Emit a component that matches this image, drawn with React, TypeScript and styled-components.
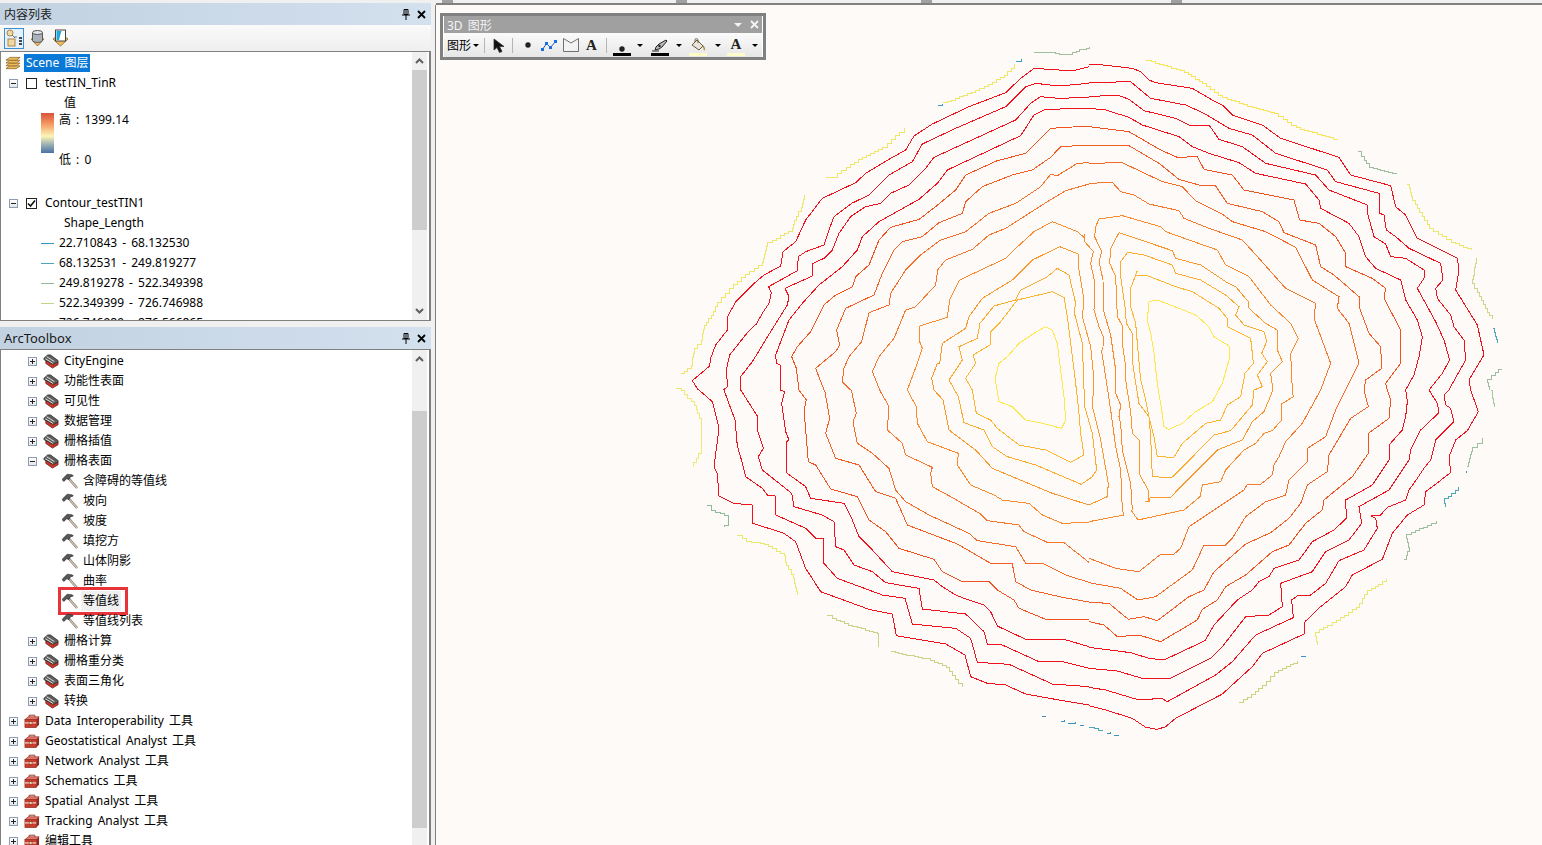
import React from "react";
import styled, { createGlobalStyle } from "styled-components";

const GlobalStyle = createGlobalStyle`
  html, body { margin: 0; padding: 0; height: 100%; overflow: hidden; }
  body {
    background: #f0f0f0;
    color: #000;
    font-family: "Noto Sans", "Noto Sans CJK SC", sans-serif;
    font-size: 12px;
    word-spacing: 2px;
  }
`;

/* ---------- contour data, drawn at 3x so it can be read straight off the zoomed map ---------- */

const RED = "#f2101c";
type Line = [string, string];
type Block = { origin: [number, number]; lines: Line[]; steps?: Line[] };

const blocks: Block[] = [
  {
    origin: [2010, 120],
    lines: [
      [RED, "88,1050 70,1022 122,978 125,955 140,915 175,870 176,830 200,785 250,735 285,705 335,678 342,635 380,605 410,540 460,475 560,428 590,400 660,358 710,330 735,288 790,252 900,200 1010,158 1055,115 1095,85 1170,90 1220,90 1260,80"],
      [RED, "163,1050 176,1040 172,990 182,945 235,878 262,852 280,820 300,790 307,758 299,740 385,692 388,650 410,635 465,615 478,575 495,530 548,490 600,465 660,405 730,365 760,312 860,265 1010,200 1070,140 1100,130 1170,138 1260,130"],
      [RED, "214,1050 215,1010 250,965 305,875 355,795 360,770 348,745 430,708 432,670 465,655 490,630 510,580 545,530 590,500 635,490 665,460 720,435 770,385 795,352 1040,240 1085,190 1115,170 1170,175 1260,172"],
      [RED, "334,1050 334,975 322,970 320,945 360,840 400,790 450,735 520,680 565,630 580,590 630,545 750,478 805,430 835,390 1055,287 1095,225 1130,208 1260,205"],
      ["#f2521f", "390,1050 382,985 368,950 385,920 425,875 465,795 500,765 550,740 560,710 600,675 630,600 665,562 750,538 800,500 860,450 890,405 985,362 1070,340 1145,265 1260,258"],
      ["#f45e25", "465,1050 440,985 500,935 512,915 503,870 530,805 615,765 640,700 675,630 700,605 760,590 810,548 880,520 890,485 940,440 1030,405 1090,390 1145,352 1175,320 1260,315"],
      ["#f66a28", "545,1050 520,1025 525,985 540,950 578,905 600,818 660,795 665,760 710,690 755,645 815,600 890,575 960,520 1040,490 1115,440 1145,403 1165,407 1225,370 1260,368"],
      ["#f8762b", "632,1050 610,995 630,950 675,895 710,810 740,800 800,735 806,690 830,660 910,628 960,585 1010,565 1135,485 1190,452 1260,432"],
      ["#fa8a2c", "715,1050 745,970 760,925 750,900 752,858 835,832 842,780 872,720 1010,655 1040,625 1095,575 1150,545 1225,575 1245,592"],
    ],
    steps: [
      ["#eee66a", "470,412 490,410 530,380 580,350 640,320 690,275 705,265"],
      ["#eee66a", "822,188 905,155 970,125 1005,105 1035,72"],
      ["#eee66a", "35,1000 65,975 75,925 95,900 105,855 125,825 145,785 180,745 215,710 280,665 295,605 345,580 370,565 375,540 395,500 405,465"],
      ["#3a9bd0", "808,195 818,192"],
      ["#3a9bd0", "1042,65 1055,58"],
      ["#a2bf9c", "1095,38 1130,35 1170,42 1200,42 1230,28 1260,22"],
      ["#eee66a", "22,1045 35,1050"],
    ],
  },
  {
    origin: [3270, 120],
    lines: [
      [RED, "0,75 25,73 130,85 155,95 180,120 200,128 310,145 370,180 400,195 430,225 520,255 575,295 750,352 785,405 905,437 920,500 950,525 985,595 1105,655 1110,690 1100,750 1165,855 1185,945 1140,1020 1145,1050"],
      [RED, "0,128 125,125 185,175 290,195 345,220 420,265 490,285 560,340 715,390 740,425 870,460 872,520 885,525 892,570 920,590 960,625 1055,670 1062,720 1040,745 1045,775 1085,825 1095,860 1125,900 1130,960 1085,1040 1080,1050"],
      [RED, "0,170 85,165 120,178 165,212 260,235 300,255 360,255 390,298 460,320 530,370 680,405 720,450 835,495 837,525 855,590 890,612 905,650 950,655 1005,690 1005,715 985,745 1040,845 1065,900 1082,960 1060,1000 1020,1050"],
      [RED, "0,205 50,210 120,232 160,255 270,290 310,320 360,340 450,368 500,400 650,432 690,480 695,505 780,550 810,590 830,650 860,685 935,720 950,780 985,840 1000,890 990,950 975,1005 950,1050"],
      ["#f2521f", "0,260 120,275 215,330 265,352 325,350 345,388 430,405 465,450 615,480 632,540 690,550 740,590 770,640 770,680 850,715 890,745 885,775 935,870 935,970 890,1030 895,1050"],
      ["#f45e25", "0,317 120,317 210,370 270,418 330,435 380,438 415,490 520,515 570,545 585,578 680,615 695,680 735,705 810,770 810,800 840,880 875,920 878,985 830,1020 825,1050"],
      ["#f66a28", "0,370 100,368 220,425 280,440 320,483 400,522 430,545 530,575 620,622 670,720 750,770 745,805 780,850 810,970 770,1050"],
      ["#f8762b", "0,430 70,427 95,455 135,465 180,492 270,512 285,535 360,565 460,600 510,655 590,745 680,790 675,835 725,970 695,1050"],
      ["#fa8a2c", "20,560 30,537 100,527 215,560 230,575 300,600 385,630 410,675 480,710 545,795 605,850 628,895 605,940 610,1050"],
      ["#fb962d", "90,578 250,632 260,655 335,675 410,725 440,740 478,785 480,805 530,850 565,870 565,930 580,965 545,1000 552,1050"],
      ["#fdab2e", "115,637 165,645 250,675 260,700 335,720 410,765 450,800 440,825 465,855 525,875 533,905 518,940 535,965 505,1005 520,1040 495,1050"],
    ],
    steps: [
      ["#f8e45a", "172,60 285,95 340,130 400,172 500,205 555,220 620,262 745,300"],
      ["#9cbd9f", "808,335 840,382 920,403"],
      ["#e8e870", "955,432 970,480 1020,565 1085,605 1145,630"],
      ["#c8d98a", "1162,655 1150,730 1175,780 1208,838"],
      ["#4da6b8", "1213,865 1225,908"],
      ["#9cbd9f", "1238,987 1195,1025 1200,1050"],
    ],
  },
  {
    origin: [2010, 1170],
    lines: [
      [RED, "1260,945 1170,930 1070,912 1010,885 955,880 905,860 888,795 830,762 682,737 670,672 600,658 455,605 410,535 380,455 345,430 252,400 250,345 195,340 150,318 145,250 135,230 150,115 130,35 90,0"],
      [RED, "1260,890 1150,882 1020,823 925,817 905,745 860,715 730,702 708,625 640,615 505,565 465,520 463,445 440,445 410,415 320,375 318,318 295,315 280,295 230,260 218,212 205,168 198,90 165,0"],
      [RED, "1260,835 1180,815 1110,815 1000,765 955,762 945,725 890,672 760,657 750,595 650,578 610,545 555,525 525,480 500,470 495,395 460,375 375,350 368,310 280,240 268,200 283,175 265,120 265,78 215,0"],
      [RED, "1260,770 1185,748 1070,748 985,708 965,665 945,645 890,627 860,615 820,590 795,570 670,545 610,480 570,440 545,378 525,340 425,325 410,290 352,248 352,155 360,150 350,125 338,40 347,5 334,0"],
      ["#f2521f", "1260,690 1130,688 1050,655 1035,630 985,600 960,575 875,573 820,545 795,508 690,475 650,425 600,390 565,320 485,297 440,225 418,215 405,60 412,30 390,0"],
      ["#f45e25", "1260,636 1180,622 1085,600 1040,575 1030,522 965,520 865,462 715,405 680,325 620,305 570,225 500,205 470,130 482,85 467,0"],
      ["#f66a28", "1260,577 1190,555 1125,522 1070,520 1040,470 925,452 900,430 780,375 710,335 680,300 660,235 610,190 565,160 552,95 562,70 547,0"],
      ["#f8762b", "1260,517 1185,458 1135,457 1065,425 1050,405 955,392 935,372 845,320 790,290 785,250 790,232 710,195 700,160 655,120 660,50 632,0"],
      ["#fa8a2c", "1260,397 1180,400 1120,375 1080,340 1000,330 975,315 905,285 865,225 868,190 775,155 745,100 742,50 715,0"],
    ],
    steps: [
      ["#eeea7a", "35,0 75,45 95,95 95,190 72,230"],
      ["#8fbb9a", "115,347 125,360 178,378 178,405 165,412"],
      ["#e8e870", "203,435 232,452 285,462 345,495 350,525 372,565 385,615"],
      ["#c5d585", "475,677 525,700 625,730 628,770"],
      ["#c5d585", "665,785 770,805 830,830 878,890"],
      ["#3a93c4", "1120,979 1128,979"],
      ["#3a93c4", "1175,993 1185,990"],
      ["#3a93c4", "1198,999 1218,997"],
      ["#3a93c4", "1232,1006 1242,1006"],
    ],
  },
  {
    origin: [3270, 1170],
    lines: [
      [RED, "1145,0 1168,65 1135,122 1100,150 1080,200 1085,248 1010,305 1005,345 955,375 910,430 880,508 790,555 770,590 695,650 648,695 645,732 520,790 490,830 400,912 260,985 230,1010 205,1018 170,1012 130,985 50,960 0,947"],
      [RED, "1080,0 1065,15 1070,45 1085,55 1095,95 1040,150 1025,210 1005,235 985,265 960,300 950,330 895,352 875,375 845,378 860,385 865,415 825,480 750,512 710,580 665,615 625,618 608,630 613,683 500,735 430,815 380,855 235,935 218,925 150,930 50,900 0,892"],
      [RED, "1020,0 1045,40 1050,68 995,120 965,180 960,210 900,300 810,350 818,400 780,450 710,485 670,545 575,580 580,650 540,675 470,680 400,770 365,805 245,865 160,865 85,843 0,835"],
      [RED, "950,0 955,35 950,80 940,120 900,165 900,210 850,285 770,330 772,385 735,420 670,455 630,510 555,535 540,560 510,575 490,600 445,630 375,705 348,752 225,810 180,805 125,788 0,772"],
      ["#f2521f", "895,0 905,30 900,85 838,130 838,190 790,260 705,330 700,360 650,400 600,465 550,485 470,555 410,590 385,630 340,658 325,690 215,755 150,735 85,740 45,705 0,695"],
      ["#f45e25", "825,0 838,50 785,85 720,195 715,245 655,285 635,340 600,385 545,428 470,462 375,545 345,600 300,620 205,692 165,680 118,688 60,640 0,637"],
      ["#f66a28", "770,0 740,60 710,140 655,175 655,215 600,270 590,315 530,335 470,380 430,445 410,465 345,465 310,540 200,620 147,630 95,595 0,578"],
      ["#f8762b", "695,0 640,100 590,155 570,200 555,225 550,255 515,283 475,283 465,300 300,410 275,475 255,492 215,493 150,545 80,535 0,505"],
      ["#fa8a2c", "100,360 105,375 0,395"],
      ["#fa8a2c", "610,0 613,20 578,42 578,90 550,122 525,130 500,160 465,180 410,240 395,275 340,285 333,320 285,360 147,390 126,360"],
      ["#fb962d", "552,0 525,65 490,95 460,150 410,170 385,180 280,285 245,322 190,322 180,325 180,333 168,333"],
      ["#fdab2e", "495,0 490,45 425,122 375,135 250,262"],
    ],
    steps: [
      ["#c8d580", "450,937 520,885 555,845 625,812"],
      ["#e8e870", "685,765 678,725 740,690 800,650 835,600 890,568"],
      ["#9dbfa0", "945,508 960,470 952,432 1040,393"],
      ["#4da6b8", "1068,352 1065,325 1108,292"],
      ["#9dbfa0", "1135,228 1150,170 1178,145"],
      ["#a8c8a0", "1205,0 1215,50"],
      ["#3a93c4", "635,799 648,799"],
      ["#3a93c4", "1130,243 1130,250"],
      ["#4da6b8", "0,1012 15,1015 40,1022"],
      ["#3a93c4", "55,1030 62,1027"],
      ["#3a93c4", "75,1036 87,1036"],
    ],
  },
  {
    origin: [2760, 660],
    lines: [
      ["#fde74c", "380,320 400,330 415,370 425,450 435,530 440,600 428,625 370,610 320,600 280,560 240,545 228,475 240,430 265,410 300,370 345,340 380,320"],
      ["#fdb52f", "400,215 435,232 445,290 455,370 470,490 478,560 485,640 495,705 455,727 380,690 300,675 235,625 215,600 172,580 160,510 140,475 170,430 162,405 213,375 215,335 245,305 295,240 380,220 400,215"],
      ["#fdab2e", "415,145 450,165 470,250 465,275 490,370 497,560 520,640 533,750 520,770 487,793 350,735 265,710 220,680 195,630 135,608 118,530 90,480 130,420 120,380 175,355 183,310 225,258 290,240 305,210 385,170 415,145"],
      ["#fb962d", "422,80 478,102 480,150 495,240 490,290 515,380 525,480 520,560 545,660 568,790 565,830 510,855 400,820 220,745 170,690 90,630 72,540 45,510 38,475 55,430 62,430 70,370 140,325 150,290 190,235 280,180 340,120 422,80"],
      ["#fa8a2c", "495,42 497,65 523,95 515,130 528,190 525,270 540,320 553,350 552,380 548,395 560,470 575,570 590,680 605,750 610,870"],
      ["#fa8a2c", "530,20 527,50 548,95 540,125 552,180 553,270 575,345 590,450 590,520 605,555 600,590 605,610 610,690 635,790 640,870"],
      ["#fb962d", "600,38 575,85 572,130 590,170 595,290 612,320 610,370 620,440 620,480 635,575 640,640 660,660 660,760 690,815 688,843 680,843"],
      ["#fdab2e", "625,98 605,125 605,170 618,260 622,310 640,340 640,420 650,490 660,550 690,590 695,650 700,770 760,773"],
      ["#fdb52f", "655,152 650,165 680,165 770,200 820,215 900,265 925,295 925,320 995,355 1000,400 1003,430 978,460 965,530 925,555 905,600 860,610 790,670 765,712 715,710 705,650 690,590 680,540 665,480 655,370 650,310 635,260 633,210 655,152"],
      ["#fde74c", "690,245 715,240 780,265 830,285 870,320 885,350 930,378 930,420 910,490 880,545 830,575 790,610 750,628 735,620 728,570 715,490 705,400 695,340 685,300 690,245"],
    ],
  },
];

// turns a rough polyline into the coarse stair pattern of the outer fragments
const stairs = (points: string) => {
  const pts = points.split(" ").map((p) => p.split(",").map(Number));
  const out: number[][] = [pts[0]];
  for (let i = 1; i < pts.length; i++) {
    const [x0, y0] = pts[i - 1];
    const [x1, y1] = pts[i];
    const n = Math.max(1, Math.round(Math.max(Math.abs(x1 - x0), Math.abs(y1 - y0)) / 12));
    for (let s = 1; s <= n; s++) {
      const x = Math.round((x0 + ((x1 - x0) * s) / n) / 3) * 3;
      const y = Math.round((y0 + ((y1 - y0) * s) / n) / 3) * 3;
      out.push([x, out[out.length - 1][1]], [x, y]);
    }
  }
  return out.map((p) => p.join(",")).join(" ");
};

/* ---------- layout ---------- */

const Shell = styled.div`
  display: flex;
  width: 1542px;
  height: 845px;
  overflow: hidden;
`;

const Dock = styled.div`
  width: 431px;
  flex: none;
  display: flex;
  flex-direction: column;
  padding-top: 3px;
`;

const TitleBar = styled.div<{ $size?: number }>`
  height: 22px;
  flex: none;
  display: flex;
  align-items: center;
  padding: 0 3px 0 4px;
  background: linear-gradient(90deg, #c2d2e1, #d3e0ee);
  color: #1a1a1a;
  font-size: ${(p) => p.$size ?? 12}px;
`;

const TitleText = styled.span`
  flex: 1;
`;

const TitleIcons = styled.div`
  display: flex;
  align-items: center;
  gap: 7px;
  padding-right: 2px;
`;

const TocToolbar = styled.div`
  height: 26px;
  flex: none;
  display: flex;
  align-items: center;
  gap: 3px;
  padding-left: 4px;
  background: linear-gradient(#fafafa, #efefef);
`;

const TocTool = styled.div<{ $active?: boolean }>`
  width: 20px;
  height: 21px;
  display: flex;
  align-items: center;
  justify-content: center;
  box-sizing: border-box;
  border: 1px solid ${(p) => (p.$active ? "#3b8fd0" : "transparent")};
  background: ${(p) => (p.$active ? "#e4f1fb" : "transparent")};
`;

const Pane = styled.div<{ $height: number }>`
  height: ${(p) => p.$height}px;
  flex: none;
  display: flex;
  box-sizing: border-box;
  border: 1px solid #808080;
  border-right-width: 2px;
  background: #fff;
  overflow: hidden;
`;

const ToolPane = styled(Pane)`
  border-bottom: none;
`;

const PaneGap = styled.div`
  height: 6px;
  flex: none;
`;

const Tree = styled.div<{ $top: number }>`
  flex: 1;
  min-width: 0;
  padding-top: ${(p) => p.$top}px;
  overflow: hidden;
`;

const Row = styled.div<{ $indent: number; $height?: number }>`
  height: ${(p) => p.$height ?? 20}px;
  display: flex;
  align-items: center;
  padding-left: ${(p) => p.$indent}px;
  white-space: nowrap;
  position: relative;
`;

// the Noto metrics sit a pixel lower than the original UI font
const Label = styled.span`
  margin-bottom: 2px;
`;

const Expander = styled.div`
  width: 9px;
  height: 9px;
  flex: none;
  box-sizing: border-box;
  border: 1px solid #8f9bb0;
  background: linear-gradient(#fff, #e4e6ea);
  position: relative;
  margin-right: 6px;
  &::before {
    content: "";
    position: absolute;
    left: 1px;
    right: 1px;
    top: 3px;
    height: 1px;
    background: #222;
  }
`;

const ExpanderPlus = styled(Expander)`
  &::after {
    content: "";
    position: absolute;
    top: 1px;
    bottom: 1px;
    left: 3px;
    width: 1px;
    background: #222;
  }
`;

const CheckBox = styled.div`
  width: 11px;
  height: 11px;
  flex: none;
  box-sizing: border-box;
  border: 1px solid #222;
  margin: 0 8px 0 2px;
  background: #fff;
  display: flex;
  align-items: center;
  justify-content: center;
`;

const Selected = styled.span`
  background: #0a78d7;
  color: #fff;
  height: 18px;
  line-height: 18px;
  padding: 0 2px;
  margin-left: 3px;
`;

const IconSlot = styled.div<{ $gap: number }>`
  width: 16px;
  height: 16px;
  flex: none;
  margin-right: ${(p) => p.$gap}px;
  display: flex;
  align-items: center;
  justify-content: center;
`;

const LegendLine = styled.span<{ $color: string }>`
  width: 13px;
  height: 1px;
  flex: none;
  margin-right: 5px;
  background: ${(p) => p.$color};
`;

const RampRow = styled.div`
  height: 60px;
  display: flex;
  padding-left: 40px;
  gap: 5px;
`;

const Ramp = styled.div`
  width: 13px;
  height: 40px;
  background: linear-gradient(#d8543a, #f59a62 28%, #fbf6b6 58%, #9fb3b4 78%, #4a70a8);
`;

const RampLabels = styled.div`
  display: flex;
  flex-direction: column;
  justify-content: space-between;
  height: 60px;
  margin-top: -3px;
  line-height: 20px;
`;

const Marked = styled.span`
  background: #f0f0f0;
  padding: 0 2px;
  margin-left: -2px;
  line-height: 20px;
`;

// red annotation the author of the screenshot drew round the tool
const Callout = styled.div`
  position: absolute;
  left: 57px;
  top: -4px;
  width: 70px;
  height: 28px;
  box-sizing: border-box;
  border: 3px solid #e8333b;
  pointer-events: none;
`;

const ScrollBar = styled.div`
  width: 15px;
  flex: none;
  margin-right: 2px;
  display: flex;
  flex-direction: column;
  background: #f0f0f0;
`;

const ScrollButton = styled.div`
  height: 18px;
  flex: none;
  display: flex;
  align-items: center;
  justify-content: center;
`;

const ScrollSpace = styled.div<{ $size?: number }>`
  flex: ${(p) => (p.$size === undefined ? 1 : "none")};
  height: ${(p) => p.$size ?? 0}px;
`;

const ScrollThumb = styled.div<{ $size: number }>`
  height: ${(p) => p.$size}px;
  flex: none;
  background: #cdcdcd;
`;

const MapArea = styled.div`
  flex: 1;
  min-width: 0;
  margin-left: 5px;
  display: flex;
  flex-direction: column;
  position: relative;
`;

const TopStrip = styled.div`
  height: 3px;
  flex: none;
  display: flex;
  box-sizing: content-box;
  border-bottom: 2px solid #808080;
`;

const Notch = styled.div<{ $left: number }>`
  width: 11px;
  height: 3px;
  margin-left: ${(p) => p.$left}px;
  background: #a0a0a0;
`;

const Canvas = styled.div`
  flex: 1;
  min-height: 0;
  background: #fefaf8;
  border-left: 1px solid #808080;
  margin-left: -1px;
`;

const MapSvg = styled.svg`
  display: block;
  shape-rendering: crispEdges;
`;

const FloatBar = styled.div`
  position: absolute;
  left: 4px;
  top: 13px;
  width: 326px;
  height: 47px;
  box-sizing: border-box;
  border: 3px solid #808080;
  display: flex;
  flex-direction: column;
  background: #f2f2f2;
`;

const FloatTitle = styled.div`
  height: 17px;
  flex: none;
  display: flex;
  align-items: center;
  padding: 0 3px;
  background: #a0a0a0;
  color: #f4f4f4;
  border: 0 solid #fff;
  border-width: 0 1px;
`;

const FloatRow = styled.div`
  flex: 1;
  display: flex;
  align-items: center;
  padding-left: 3px;
  background: linear-gradient(#fbfbfb, #e6e6e6);
  border: 0 solid #fff;
  border-width: 0 1px;
  white-space: nowrap;
`;

const FloatTool = styled.div<{ $width: number }>`
  width: ${(p) => p.$width}px;
  height: 22px;
  flex: none;
  display: flex;
  align-items: center;
  justify-content: center;
`;

const Separator = styled.div`
  width: 1px;
  height: 15px;
  flex: none;
  margin: 0 5px;
  background: #b5b5b5;
`;

const Caret = styled.span`
  width: 0;
  height: 0;
  flex: none;
  border-left: 3px solid transparent;
  border-right: 3px solid transparent;
  border-top: 3px solid #000;
`;

const WhiteCaret = styled(Caret)`
  border-left-width: 4px;
  border-right-width: 4px;
  border-top: 4px solid #f4f4f4;
  margin-right: 8px;
`;

const MenuLabel = styled.span`
  flex: none;
  margin-right: 2px;
`;

/* ---------- icons ---------- */

const PinIcon = () => (
  <svg width="8" height="11" viewBox="0 0 8 11">
    <path d="M2 .5h4v5H2zM0 6h8M4 6v5" fill="none" stroke="#000" />
    <path d="M4 1v4" stroke="#000" />
  </svg>
);

const CloseIcon = ({ color = "#000" }: { color?: string }) => (
  <svg width="9" height="9" viewBox="0 0 9 9">
    <path d="M1 1l7 7M8 1L1 8" stroke={color} strokeWidth="1.8" />
  </svg>
);

const ChevronIcon = ({ up }: { up?: boolean }) => (
  <svg width="9" height="6" viewBox="0 0 9 6">
    <path d={up ? "M1 5l3.5-3.5L8 5" : "M1 1l3.5 3.5L8 1"} fill="none" stroke="#606060" strokeWidth="2" />
  </svg>
);

const ToolsetIcon = () => (
  <svg width="17" height="15" viewBox="0 0 17 15">
    <path d="M3 6l8 5 5-3v3l-6 3.500L3 9.500z" fill="#c8352a" stroke="#6e1f18" strokeWidth=".8" />
    <path d="M1 4l4-3.500h3l8 6V8l-5 2.500L1 5.500z" fill="#5e5e5e" stroke="#2a2a2a" strokeWidth=".8" />
    <path d="M4 2.500l8 5M2.500 4.500l8 5" stroke="#e6e6e6" strokeWidth="1" />
  </svg>
);

const ToolboxIcon = () => (
  <svg width="17" height="15" viewBox="0 0 17 15">
    <path d="M5.500 2.500V.8h6v1.700" fill="none" stroke="#8c3024" />
    <path d="M1 5.500L4.500 2.500H16L13 5.500z" fill="#e8786a" stroke="#8c2a20" strokeWidth=".7" />
    <path d="M13 5.500L16 2.500v8.500L13 14z" fill="#8e2a1e" />
    <rect x="1" y="5.500" width="12" height="8.500" fill="#cc3b2d" stroke="#8c2a20" strokeWidth=".7" />
    <path d="M1 9h12" stroke="#f5d8cc" strokeWidth="1.300" />
    <rect x="5.500" y="7.500" width="3" height="3" fill="#f2e2b0" stroke="#6e2a20" strokeWidth=".6" />
  </svg>
);

const HammerIcon = () => (
  <svg width="17" height="16" viewBox="0 0 17 16">
    <path d="M6.500 4.500L16 15.500" stroke="#85786a" strokeWidth="2.600" />
    <path d="M6.500 4.500L16 15.500" stroke="#dad0c0" strokeWidth="1.100" />
    <path d="M0 6.500L5.500.8 11 1.500l1 1.200-3 .8-1.500 3L5 5.500l-3 3z" fill="#55585c" stroke="#2b2b2b" strokeWidth=".7" />
  </svg>
);

const LayersIcon = () => (
  <svg width="17" height="15" viewBox="0 0 17 15">
    {[9, 6, 3, 0].map((y) => (
      <path key={y} d={`M1 ${y + 4}l4-${3}h11l-4 3z`} fill="#eebd62" stroke="#8a6220" strokeWidth=".8" />
    ))}
  </svg>
);

const DrawOrderIcon = () => (
  <svg width="18" height="18" viewBox="0 0 18 18">
    <circle cx="5" cy="4" r="3" fill="#f3d9a0" stroke="#a9864a" />
    <rect x="3" y="10" width="7" height="7" fill="#f3d9a0" stroke="#a9864a" />
    <path d="M7 6l3 3M9 8h3" stroke="#777" />
    <path d="M14 9h3M14 12h3M14 15h3" stroke="#111" strokeWidth="1.400" />
  </svg>
);

const SourceIcon = () => (
  <svg width="17" height="18" viewBox="0 0 17 18">
    <path d="M2 10l6.500 7L15 10z" fill="#eebd62" stroke="#a07a30" />
    <path d="M3.500 3.500v8c0 2.500 10 2.500 10 0v-8" fill="#aab3bb" stroke="#555" />
    <ellipse cx="8.500" cy="3.500" rx="5" ry="2" fill="#e2e6ea" stroke="#555" />
  </svg>
);

const VisibleIcon = () => (
  <svg width="17" height="18" viewBox="0 0 17 18">
    <path d="M1 10l7.500 7L16 10l-3-2H4z" fill="#eebd62" stroke="#a07a30" />
    <rect x="3.500" y="1" width="10" height="11" fill="#fff" stroke="#444" />
    <path d="M4.500 2h5l-1.500 5-1 4h-2.500z" fill="#1fa8d8" />
  </svg>
);

const ArrowIcon = () => (
  <svg width="12" height="15" viewBox="0 0 12 15">
    <path d="M1 1v11l3-2.500L6.500 14.500l2.500-1L6.500 8.500H11z" fill="#111" stroke="#333" strokeWidth=".8" />
  </svg>
);

const PolylineIcon = () => (
  <svg width="16" height="11" viewBox="0 0 16 11">
    <path d="M1.500 9.500l4-6 4 4 5-6" fill="none" stroke="#2b5fb0" />
    {[[0, 8], [4, 2], [8, 6], [13, 0]].map(([x, y]) => (
      <rect key={x} x={x} y={y} width="3" height="3" fill="#1a6fe0" />
    ))}
  </svg>
);

const EnvelopeIcon = () => (
  <svg width="16" height="14" viewBox="0 0 16 14">
    <path d="M.5 .5L8 5l7.500-4.500v13H.5z" fill="#f2f2f2" stroke="#707070" />
  </svg>
);

const Dot = () => (
  <svg width="6" height="6" viewBox="0 0 6 6">
    <circle cx="3" cy="3" r="2.700" fill="#222" />
  </svg>
);

const SwatchTool = styled.div`
  height: 22px;
  display: flex;
  flex-direction: column;
  align-items: center;
  justify-content: flex-end;
  gap: 1px;
`;

const SwatchBar = styled.div<{ $color: string; $width: number }>`
  width: ${(p) => p.$width}px;
  height: 3px;
  background: ${(p) => p.$color};
`;

const SerifA = styled.span<{ $size: number }>`
  font-family: "Liberation Serif", serif;
  font-weight: bold;
  font-size: ${(p) => p.$size}px;
  line-height: ${(p) => p.$size}px;
  color: #222;
`;

const PenIcon = () => (
  <svg width="16" height="13" viewBox="0 0 16 13">
    <path d="M14 1l1 1-5 6-3 2-4 1 1-3 3-3z" fill="#bbb" stroke="#222" />
    <circle cx="7.500" cy="7" r="1.200" fill="#222" />
    <path d="M0 12h7" stroke="#222" />
  </svg>
);

const BucketIcon = () => (
  <svg width="16" height="14" viewBox="0 0 16 14">
    <path d="M2 7l5-5 6 6-4 4z" fill="#e8e4dc" stroke="#6a5a40" />
    <path d="M5 4V1.500C5 .5 8 .5 8 2v3" fill="none" stroke="#6a5a40" />
    <path d="M13 8c1 1.500 2 3 1 4" fill="none" stroke="#b08a40" strokeWidth="1.500" />
  </svg>
);

const CheckMark = () => (
  <svg width="9" height="9" viewBox="0 0 9 9">
    <path d="M1 4.500l2.500 2.500L8 1.500" fill="none" stroke="#111" strokeWidth="1.600" />
  </svg>
);

/* ---------- tree content ---------- */

const toolsets: [string, boolean][] = [
  ["CityEngine", false],
  ["功能性表面", false],
  ["可见性", false],
  ["数据管理", false],
  ["栅格插值", false],
  ["栅格表面", true],
];
const surfaceTools = ["含障碍的等值线", "坡向", "坡度", "填挖方", "山体阴影", "曲率", "等值线", "等值线列表"];
const moreToolsets = ["栅格计算", "栅格重分类", "表面三角化", "转换"];
const toolboxes = [
  "Data Interoperability 工具",
  "Geostatistical Analyst 工具",
  "Network Analyst 工具",
  "Schematics 工具",
  "Spatial Analyst 工具",
  "Tracking Analyst 工具",
  "编辑工具",
];
const legend: [string, string][] = [
  ["#3a93c4", "22.710843 - 68.132530"],
  ["#4da6b8", "68.132531 - 249.819277"],
  ["#8fbb9a", "249.819278 - 522.349398"],
  ["#c5d585", "522.349399 - 726.746988"],
  ["#e8e870", "726.746989 - 876.566865"],
];

const ToolsetRow = ({ label, open }: { label: string; open?: boolean }) => (
  <Row $indent={27}>
    {open ? <Expander /> : <ExpanderPlus />}
    <IconSlot $gap={5}>
      <ToolsetIcon />
    </IconSlot>
    <Label>{label}</Label>
  </Row>
);

export default function App() {
  return (
    <Shell>
      <GlobalStyle />
      <Dock>
        <TitleBar>
          <TitleText>内容列表</TitleText>
          <TitleIcons>
            <PinIcon />
            <CloseIcon />
          </TitleIcons>
        </TitleBar>
        <TocToolbar>
          <TocTool $active>
            <DrawOrderIcon />
          </TocTool>
          <TocTool>
            <SourceIcon />
          </TocTool>
          <TocTool>
            <VisibleIcon />
          </TocTool>
        </TocToolbar>
        <Pane $height={270}>
          <Tree $top={1}>
            <Row $indent={4} $height={20}>
              <IconSlot $gap={0}>
                <LayersIcon />
              </IconSlot>
              <Selected>Scene 图层</Selected>
            </Row>
            <Row $indent={8}>
              <Expander />
              <CheckBox />
              <Label>testTIN_TinR</Label>
            </Row>
            <Row $indent={63}>
              <Label>值</Label>
            </Row>
            <RampRow>
              <Ramp />
              <RampLabels>
                <span>高 : 1399.14</span>
                <span>低 : 0</span>
              </RampLabels>
            </RampRow>
            <Row $indent={0}></Row>
            <Row $indent={8}>
              <Expander />
              <CheckBox>
                <CheckMark />
              </CheckBox>
              <Label>Contour_testTIN1</Label>
            </Row>
            <Row $indent={63}>
              <Label>Shape_Length</Label>
            </Row>
            {legend.map(([color, text]) => (
              <Row $indent={40} key={text}>
                <LegendLine $color={color} />
                <Label>{text}</Label>
              </Row>
            ))}
          </Tree>
          <ScrollBar>
            <ScrollButton>
              <ChevronIcon up />
            </ScrollButton>
            <ScrollThumb $size={160} />
            <ScrollSpace />
            <ScrollButton>
              <ChevronIcon />
            </ScrollButton>
          </ScrollBar>
        </Pane>
        <PaneGap />
        <TitleBar $size={13}>
          <TitleText>ArcToolbox</TitleText>
          <TitleIcons>
            <PinIcon />
            <CloseIcon />
          </TitleIcons>
        </TitleBar>
        <ToolPane $height={496}>
          <Tree $top={1}>
            {toolsets.map(([label, open]) => (
              <ToolsetRow key={label} label={label} open={open} />
            ))}
            {surfaceTools.map((tool) => (
              <Row $indent={61} key={tool}>
                <IconSlot $gap={5}>
                  <HammerIcon />
                </IconSlot>
                {tool === "等值线" ? (
                  <>
                    <Marked>{tool}</Marked>
                    <Callout />
                  </>
                ) : (
                  <Label>{tool}</Label>
                )}
              </Row>
            ))}
            {moreToolsets.map((label) => (
              <ToolsetRow key={label} label={label} />
            ))}
            {toolboxes.map((label) => (
              <Row $indent={8} key={label}>
                <ExpanderPlus />
                <IconSlot $gap={5}>
                  <ToolboxIcon />
                </IconSlot>
                <Label>{label}</Label>
              </Row>
            ))}
          </Tree>
          <ScrollBar>
            <ScrollButton>
              <ChevronIcon up />
            </ScrollButton>
            <ScrollSpace $size={43} />
            <ScrollThumb $size={417} />
            <ScrollSpace />
          </ScrollBar>
        </ToolPane>
      </Dock>

      <MapArea>
        <TopStrip>
          <Notch $left={6} />
          <Notch $left={223} />
          <Notch $left={234} />
          <Notch $left={239} />
        </TopStrip>
        <Canvas>
          <MapSvg width="1105" height="840" viewBox="1311 15 3315 2520">
            {blocks.map((block) => (
              <g key={block.origin.join()} transform={`translate(${block.origin[0]} ${block.origin[1]})`} fill="none" strokeWidth="3">
                {block.lines.map(([color, points]) => (
                  <polyline key={points} points={points} stroke={color} />
                ))}
                {block.steps?.map(([color, points]) => (
                  <polyline key={points} points={stairs(points)} stroke={color} />
                ))}
              </g>
            ))}
          </MapSvg>
        </Canvas>
        <FloatBar>
          <FloatTitle>
            <TitleText>
              <Label>3D 图形</Label>
            </TitleText>
            <WhiteCaret />
            <CloseIcon color="#f4f4f4" />
          </FloatTitle>
          <FloatRow>
            <MenuLabel>图形</MenuLabel>
            <Caret />
            <Separator />
            <FloatTool $width={17}>
              <ArrowIcon />
            </FloatTool>
            <Separator />
            <FloatTool $width={20}>
              <Dot />
            </FloatTool>
            <FloatTool $width={22}>
              <PolylineIcon />
            </FloatTool>
            <FloatTool $width={22}>
              <EnvelopeIcon />
            </FloatTool>
            <FloatTool $width={19}>
              <SerifA $size={15}>A</SerifA>
            </FloatTool>
            <Separator />
            <FloatTool $width={20}>
              <SwatchTool>
                <Dot />
                <SwatchBar $color="#000" $width={18} />
              </SwatchTool>
            </FloatTool>
            <FloatTool $width={16}>
              <Caret />
            </FloatTool>
            <FloatTool $width={24}>
              <SwatchTool>
                <PenIcon />
                <SwatchBar $color="#000" $width={18} />
              </SwatchTool>
            </FloatTool>
            <FloatTool $width={14}>
              <Caret />
            </FloatTool>
            <FloatTool $width={24}>
              <SwatchTool>
                <BucketIcon />
                <SwatchBar $color="#fdfbc8" $width={18} />
              </SwatchTool>
            </FloatTool>
            <FloatTool $width={16}>
              <Caret />
            </FloatTool>
            <FloatTool $width={20}>
              <SwatchTool>
                <SerifA $size={15}>A</SerifA>
                <SwatchBar $color="#fdfbc8" $width={18} />
              </SwatchTool>
            </FloatTool>
            <FloatTool $width={18}>
              <Caret />
            </FloatTool>
          </FloatRow>
        </FloatBar>
      </MapArea>
    </Shell>
  );
}
